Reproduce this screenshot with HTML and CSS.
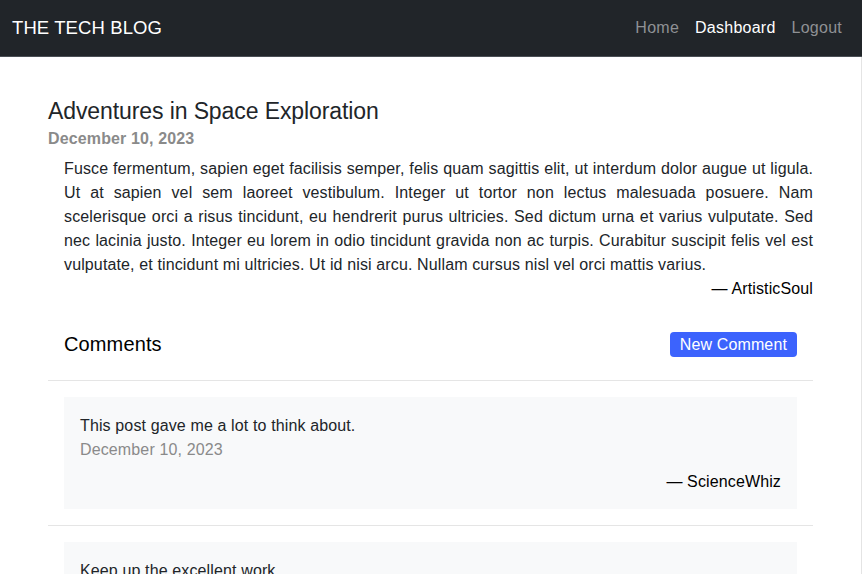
FILE: index.html
```html
<!DOCTYPE html>
<html lang="en">
<head>
<meta charset="utf-8">
<title>The Tech Blog</title>
<link rel="stylesheet" href="styles.css">
</head>
<body>
<nav class="navbar">
  <a class="brand" href="#">THE TECH BLOG</a>
  <div class="nav-links">
    <a class="nav-link" href="#">Home</a>
    <a class="nav-link active" href="#">Dashboard</a>
    <a class="nav-link" href="#">Logout</a>
  </div>
</nav>
<main class="page">
  <article class="post">
    <h1 class="post-title">Adventures in Space Exploration</h1>
    <div class="post-date">December 10, 2023</div>
    <p class="post-body"><span class="line">Fusce fermentum, sapien eget facilisis semper, felis quam sagittis elit, ut interdum dolor augue ut ligula.</span> <span class="line">Ut at sapien vel sem laoreet vestibulum. Integer ut tortor non lectus malesuada posuere. Nam</span> <span class="line">scelerisque orci a risus tincidunt, eu hendrerit purus ultricies. Sed dictum urna et varius vulputate. Sed</span> <span class="line">nec lacinia justo. Integer eu lorem in odio tincidunt gravida non ac turpis. Curabitur suscipit felis vel est</span> <span class="line last">vulputate, et tincidunt mi ultricies. Ut id nisi arcu. Nullam cursus nisl vel orci mattis varius.</span></p>
    <div class="post-author">— ArtisticSoul</div>
  </article>
  <section class="comments">
    <div class="comments-header">
      <h2 class="comments-title">Comments</h2>
      <button class="btn-primary" type="button">New Comment</button>
    </div>
    <hr class="divider">
    <div class="comment">
      <div class="comment-text">This post gave me a lot to think about.</div>
      <div class="comment-date">December 10, 2023</div>
      <div class="comment-author">— ScienceWhiz</div>
    </div>
    <hr class="divider">
    <div class="comment">
      <div class="comment-text">Keep up the excellent work.</div>
      <div class="comment-date">December 10, 2023</div>
      <div class="comment-author">— TechGuru</div>
    </div>
  </section>
</main>
</body>
</html>
```
FILE: styles.css
```css
* { box-sizing: border-box; }
html, body {
  margin: 0;
  padding: 0;
  background: #ffffff;
}
body {
  font-family: "Liberation Sans", Arial, sans-serif;
  font-size: 16px;
  line-height: 24px;
  letter-spacing: 0.13px;
  color: #212529;
}
.navbar {
  display: flex;
  align-items: center;
  justify-content: space-between;
  height: 57px;
  padding: 0 12px;
  background: #212529;
  border-bottom: 1px solid #4a4f55;
}
.brand {
  color: #ffffff;
  font-size: 18.5px;
  letter-spacing: 0.1px;
  text-decoration: none;
  line-height: 28px;
}
.nav-links {
  display: flex;
}
.nav-link {
  padding: 0 8px;
  color: #8f9194;
  text-decoration: none;
  font-size: 16px;
  letter-spacing: 0.25px;
}
.nav-link.active {
  color: #ffffff;
}
.page {
  padding: 41px 48px 0 48px;
  border-right: 1px solid #e4e4e4;
  min-height: calc(100vh - 57px);
}
.post-title {
  margin: 0;
  font-size: 23px;
  font-weight: 500;
  line-height: 27.6px;
  letter-spacing: -0.1px;
  color: #212529;
}
.post-date {
  margin-top: 1px;
  color: #8a8a8a;
  font-weight: 700;
  line-height: 24px;
}
.post-body {
  margin: 6px 0 0 16px;
  text-align: justify;
}
.post-body .line {
  display: block;
  text-align: justify;
  text-align-last: justify;
}
.post-body .line.last {
  text-align-last: left;
}
.post-author {
  text-align: right;
  color: #000;
}
.comments {
  margin-top: 31px;
}
.comments-header {
  display: flex;
  align-items: center;
  justify-content: space-between;
  padding: 0 16px;
}
.comments-title {
  margin: 0;
  font-size: 20px;
  font-weight: 500;
  line-height: 24px;
  color: #000;
}
.btn-primary {
  font-family: inherit;
  font-size: 16px;
  line-height: 25px;
  letter-spacing: 0.13px;
  padding: 0 10px;
  border: 0;
  border-radius: 4px;
  background: #3c63fd;
  color: #ffffff;
}
.divider {
  margin: 23px 0 16px 0;
  border: 0;
  border-top: 1px solid #e5e5e5;
}
.comment + .divider { margin-top: 16px; }
.comment {
  margin: 0 16px;
  padding: 17px 16px 15px 16px;
  background: #f8f9fa;
}
.comment-text { color: #212529; }
.comment-date { color: #8a8a8a; }
.comment-author {
  margin-top: 8px;
  text-align: right;
  color: #000;
}
```
